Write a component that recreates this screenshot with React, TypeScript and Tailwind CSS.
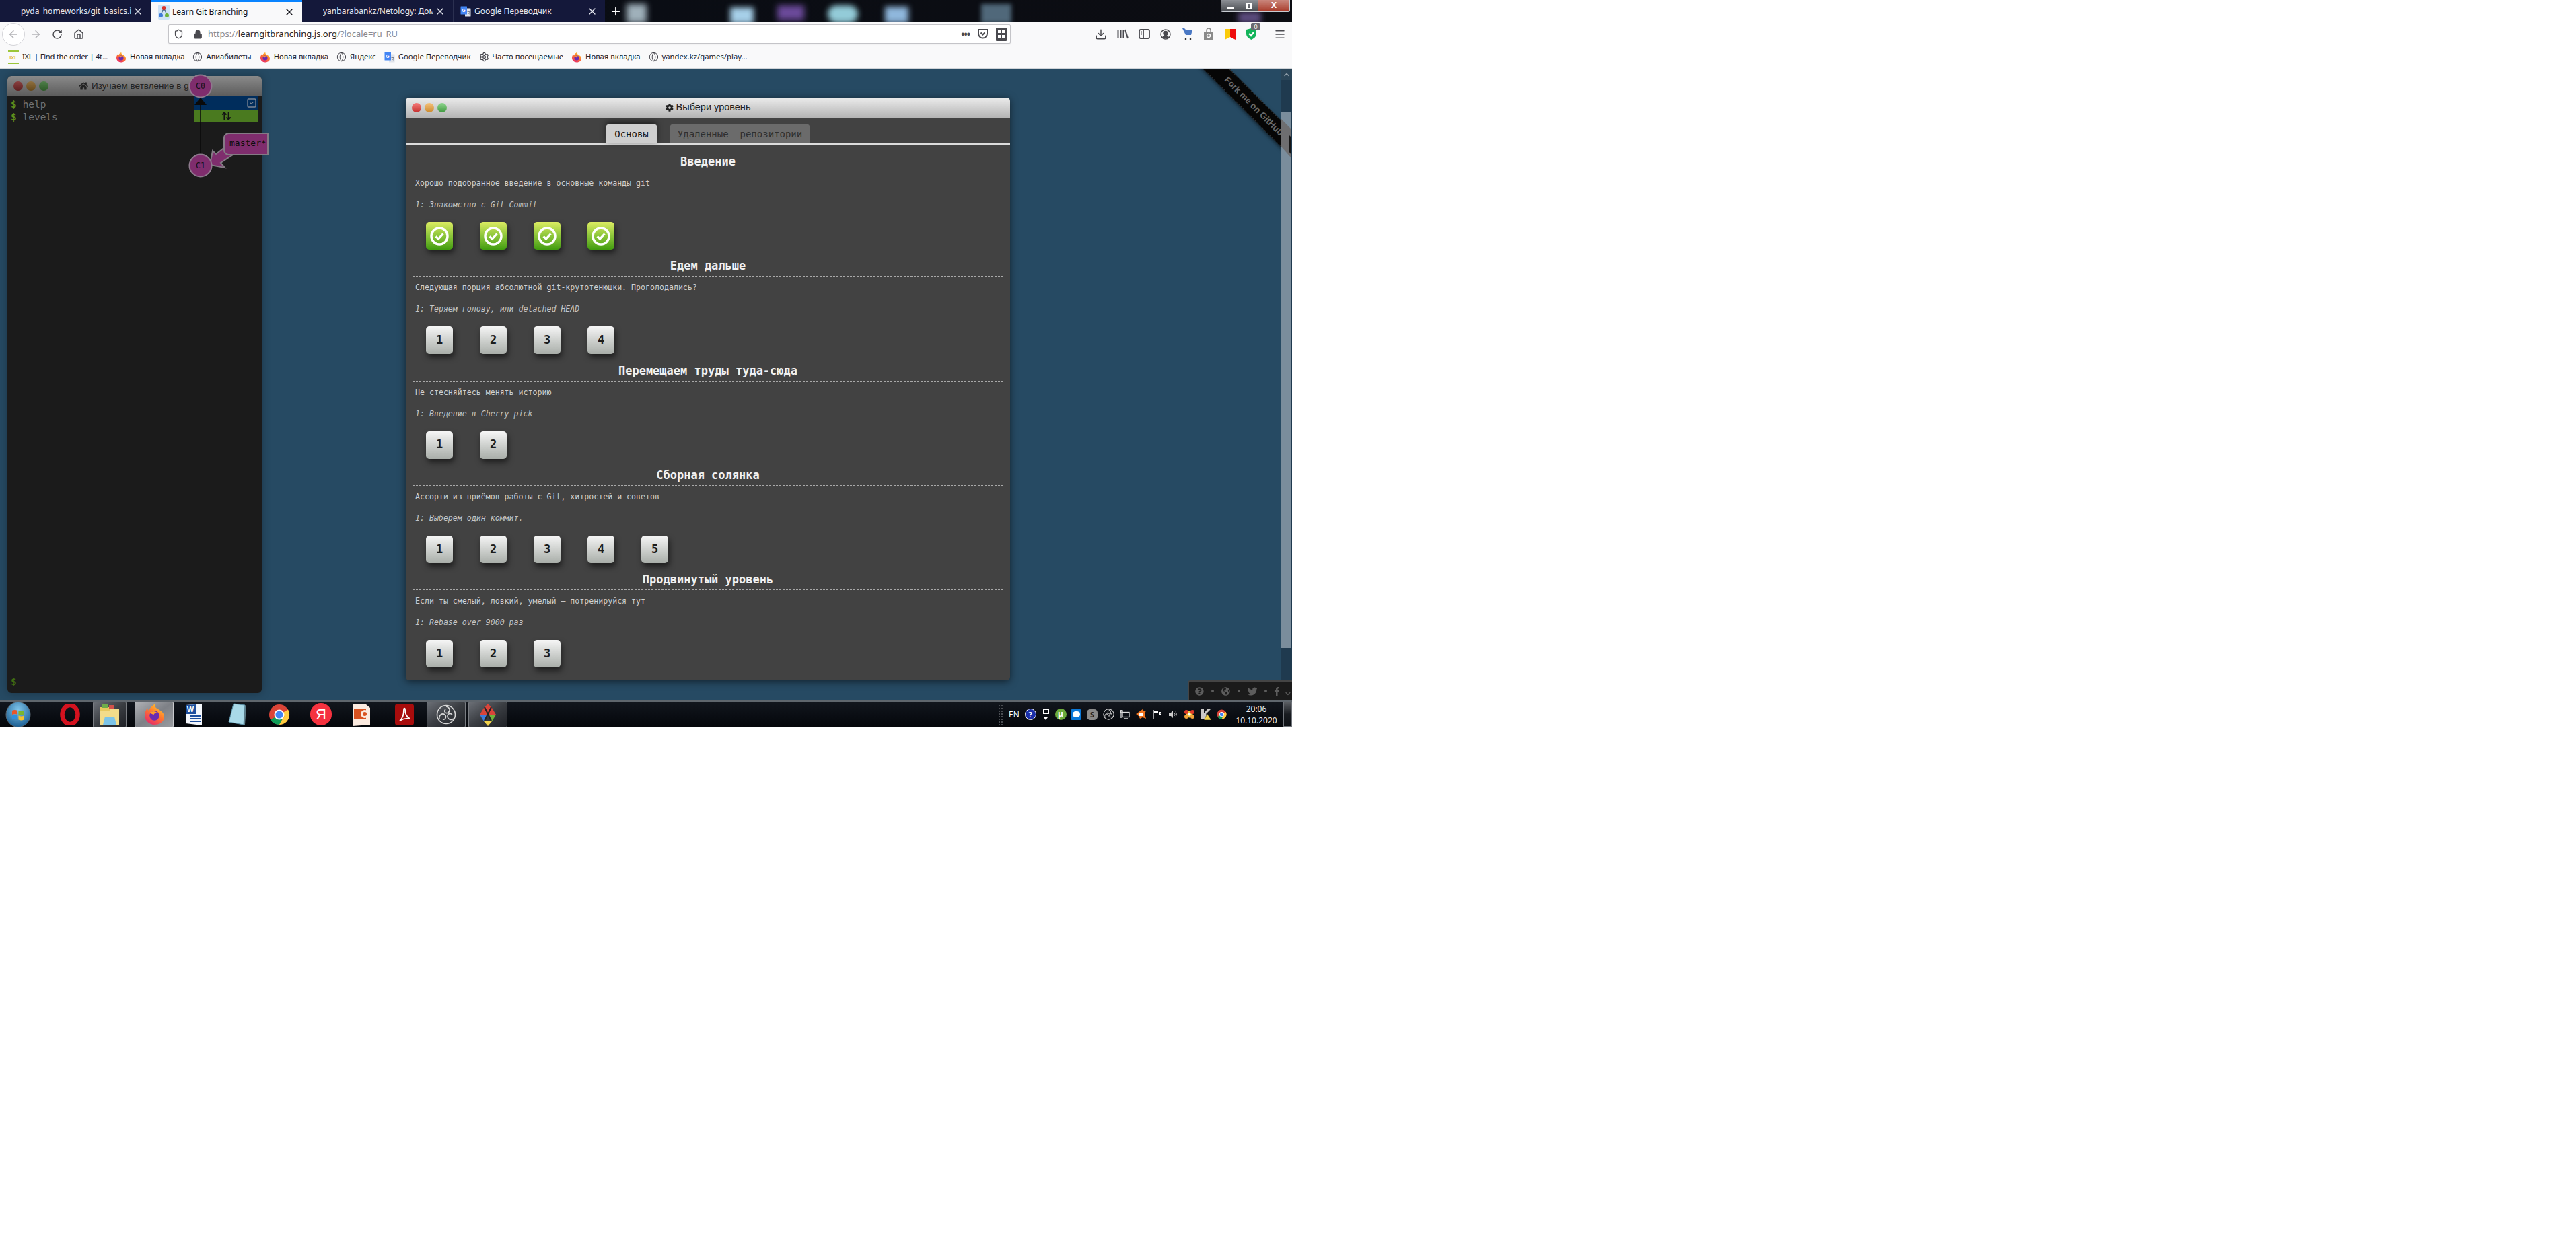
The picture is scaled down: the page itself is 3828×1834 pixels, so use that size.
import React from "react";
import { ArrowLeft, ArrowRight, RotateCw, Home, Lock, Download, Globe, Settings, X, Plus, Menu, Shield, ChevronUp, ChevronDown, ArrowUpDown, SquareCheck } from "lucide-react";
import { FaQuestionCircle, FaGlobeAmericas, FaTwitter, FaFacebookF, FaHome, FaCog } from "react-icons/fa";

const FirefoxIcon = ({ s = 16 }: { s?: number }) => (
  <svg width={s} height={s} viewBox="0 0 32 32" className="shrink-0">
    <defs>
      <linearGradient id="ffg" x1="0.8" y1="0" x2="0.2" y2="1">
        <stop offset="0" stopColor="#ffd52e" />
        <stop offset="0.45" stopColor="#ff7a2e" />
        <stop offset="1" stopColor="#e6246e" />
      </linearGradient>
    </defs>
    <path d="M16 31C8 31 2 25 2 17c0-4 2-8 4-10 0 2 1 3 2 4 1-4 5-7 9-10-1 3 0 5 3 7 5 3 10 5 10 12 0 6-6 11-14 11z" fill="url(#ffg)" />
    <circle cx="16" cy="18" r="7" fill="#6a2bb0" />
    <path d="M9 14c3-3 8-3 11 0-3 0-5 1-5 3-2-2-4-2-6-3z" fill="#ff9c2e" />
  </svg>
);

const TranslateIcon = ({ s = 16 }: { s?: number }) => (
  <svg width={s} height={s} viewBox="0 0 32 32" className="shrink-0">
    <rect x="14" y="7" width="17" height="24" rx="1" fill="#dfe3ea" />
    <rect x="1" y="1" width="19" height="24" rx="1" fill="#4285f4" />
    <text x="10" y="17" fontSize="13" fontWeight="700" textAnchor="middle" fill="#fff" fontFamily="Liberation Sans, sans-serif">G</text>
    <path d="M21 17h8M25 15v2M22 25c3-2 5-4 6-8M23 19c1 3 4 5 6 6" stroke="#6b7280" strokeWidth="1.6" fill="none" />
  </svg>
);

const GitBranchFav = () => (
  <svg width="17" height="22" viewBox="0 0 17 22" className="shrink-0">
    <rect width="17" height="22" rx="2" fill="#cfe3f6" />
    <path d="M8.5 5 4 15M8.5 5 13 15M8.5 5v5" stroke="#33527a" strokeWidth="1.2" />
    <circle cx="8.5" cy="5" r="3" fill="#d9342b" />
    <circle cx="4" cy="16" r="3" fill="#3d7bd9" />
    <circle cx="13" cy="16" r="3" fill="#6fb33a" />
  </svg>
);

const IxlIcon = () => (
  <svg width="16" height="20" viewBox="0 0 16 20" className="shrink-0">
    <rect y="0" width="16" height="2" fill="#9cc63a" />
    <rect y="18" width="16" height="2" fill="#9cc63a" />
    <text x="8" y="13" fontSize="7.5" fontWeight="700" textAnchor="middle" fill="#e0b73a" fontFamily="Liberation Sans, sans-serif">IXL</text>
  </svg>
);

const ChromeIcon = ({ s = 30 }: { s?: number }) => (
  <svg width={s} height={s} viewBox="0 0 32 32">
    <circle cx="16" cy="16" r="15" fill="#db4437" />
    <path d="M16 16 3 23.5A15 15 0 0 0 16 31l7.5-13z" fill="#0f9d58" />
    <path d="M16 16 29 8.5A15 15 0 0 1 16 31l7.5-13z" fill="#ffcd40" />
    <circle cx="16" cy="16" r="7.5" fill="#fff" />
    <circle cx="16" cy="16" r="5.6" fill="#4285f4" />
  </svg>
);

const Dot = ({ c }: { c: string }) => <span className={`w-[14px] h-[14px] rounded-full ${c}`} />;

const Tab = ({ title, icon, active, last }: { title: string; icon?: React.ReactNode; active?: boolean; last?: boolean }) => (
  <div
    className={
      active
        ? "w-[224px] h-[33px] flex items-center pl-[10px] pr-[11px] bg-[#f9f9fa] text-[#15141a] border-t-[3px] border-[#0a84ff] shrink-0"
        : `w-[225px] h-[33px] flex items-center pl-[10px] pr-[11px] bg-[#14183a] text-[#e4e6ee] shrink-0 ${last ? "" : "border-r border-[#2b3050]"}`
    }
  >
    <div className="w-[21px] shrink-0 flex justify-start">{icon}</div>
    <div className="flex-1 overflow-hidden whitespace-nowrap text-[12px] leading-[20px]">{title}</div>
    <X size={16} strokeWidth={2} className="ml-[2px] shrink-0" />
  </div>
);

const Bookmark = ({ icon, label, tight }: { icon: React.ReactNode; label: string; tight?: boolean }) => (
  <div className="flex items-center gap-[5px] whitespace-nowrap">
    {icon}
    <span className={`text-[11.3px] text-[#20232a] ${tight ? "tracking-[-0.3px]" : ""}`}>{label}</span>
  </div>
);

const G = () => <Globe size={15} strokeWidth={1.5} className="text-[#3f3f46] shrink-0" />;

const LevelBtn = ({ n }: { n: number }) => (
  <div className="w-[40px] h-[41px] rounded-[5px] bg-gradient-to-b from-[#f6f6f6] to-[#a9aea9] shadow-[2px_5px_8px_rgba(0,0,0,0.55)] flex items-center justify-center text-[17px] font-bold text-[#1c1c1c]">
    {n}
  </div>
);

const DoneBtn = () => (
  <div className="w-[40px] h-[41px] rounded-[5px] bg-gradient-to-b from-[#dcec62] via-[#8cc63a] to-[#3f9c0c] shadow-[2px_5px_8px_rgba(0,0,0,0.55)] flex items-center justify-center">
    <svg width="30" height="30" viewBox="0 0 30 30">
      <circle cx="15" cy="15" r="12" fill="none" stroke="#fff" strokeWidth="3.4" />
      <path d="M9.5 15.5 13.5 19 20.5 11.5" fill="none" stroke="#fff" strokeWidth="3.2" />
    </svg>
  </div>
);

const Section = ({ title, desc, item, count, done }: { title: string; desc: string; item: string; count: number; done?: boolean }) => (
  <section className="h-[155.25px] shrink-0 px-[10px]">
    <h2 className="h-[31px] border-b border-dashed border-[#a8a8a8] text-center text-[17px] leading-[30px] font-bold text-[#f0f0f0]">{title}</h2>
    <p className="mt-[8px] pl-[4px] h-[16px] leading-[16px] text-[11.6px] text-[#cfcfcf] whitespace-pre">{desc}</p>
    <p className="mt-[16px] pl-[4px] h-[16px] leading-[16px] text-[11.6px] italic text-[#c4c4c4] whitespace-pre">{item}</p>
    <div className="mt-[18px] pl-[20px] flex gap-[40px]">
      {Array.from({ length: count }, (_, i) => (done ? <DoneBtn key={i} /> : <LevelBtn key={i} n={i + 1} />))}
    </div>
  </section>
);

const Graph = () => (
  <svg viewBox="280 110 125 160" width="125" height="160" className="absolute left-[269px] top-[-3px] overflow-visible">
    <line x1="298" y1="150" x2="298" y2="230" stroke="#0a0a0a" strokeWidth="1.5" />
    <polygon points="298,145 289,156 307,156" fill="#0a0a0a" />
    <circle cx="298" cy="128" r="16.5" fill="#7f2d6d" stroke="#8f7b8e" strokeWidth="2" />
    <text x="298" y="132" textAnchor="middle" fontSize="11.5" fill="#0d0d0d" fontFamily="DejaVu Sans Mono, monospace">C0</text>
    <polygon points="312,245 316,224 321,229 335,218 346,230 328,242 334,249" fill="#7f2d6d" stroke="#857a85" strokeWidth="2" />
    <circle cx="298" cy="246" r="16.5" fill="#7f2d6d" stroke="#8f7b8e" strokeWidth="2" />
    <text x="298" y="250" textAnchor="middle" fontSize="11.5" fill="#0d0d0d" fontFamily="DejaVu Sans Mono, monospace">C1</text>
    <path d="M398 198H340a7 7 0 0 0-7 7v18a7 7 0 0 0 7 7H398z" fill="#7f2d6d" stroke="#857a85" strokeWidth="2" />
    <text x="341" y="217" fontSize="13" fill="#0d0d0d" fontFamily="DejaVu Sans Mono, monospace">master*</text>
  </svg>
);

const Terminal = () => (
  <div className="relative w-[378px] h-[917px] mt-[11px] ml-[11px] shrink-0 rounded-[6px] bg-[#1b1b1b] shadow-[0_0_14px_rgba(0,0,0,0.3)]">
    <div className="h-[30px] rounded-t-[6px] bg-gradient-to-b from-[#8a8a8a] to-[#5c5c5c] flex items-center pl-[9px] gap-[5px] overflow-hidden">
      <span className="w-[14px] h-[14px] rounded-full bg-gradient-to-b from-[#8a4040] to-[#5e2020]" />
      <span className="w-[14px] h-[14px] rounded-full bg-gradient-to-b from-[#8f7040] to-[#66491c]" />
      <span className="w-[14px] h-[14px] rounded-full bg-gradient-to-b from-[#4f7f4a] to-[#2c5a28]" />
      <div className="ml-[40px] flex items-center gap-[5px] whitespace-nowrap text-[13.5px] text-[#222] font-['Liberation_Sans',sans-serif]">
        <FaHome size={14} />
        <span>Изучаем ветвление в git</span>
      </div>
    </div>
    <div className="pt-[3px] pl-[5px] font-['DejaVu_Sans_Mono',monospace] text-[14.4px] leading-[18.5px] text-[#727272]">
      <div><span className="font-bold text-[#5f8f1c] mr-[9px]">$</span>help</div>
      <div><span className="font-bold text-[#5f8f1c] mr-[9px]">$</span>levels</div>
    </div>
    <div className="absolute left-[5px] bottom-[5px] font-['DejaVu_Sans_Mono',monospace] text-[14.4px] font-bold text-[#3f6a12]">$</div>
    <div className="absolute left-[278px] top-[30px] w-[95px]">
      <div className="h-[20px] bg-[#002d5c] flex items-center justify-end pr-[2px]"><SquareCheck size={16} className="text-[#7d8794]" /></div>
      <div className="h-[19px] bg-[#4a7a1f] flex items-center justify-center"><ArrowUpDown size={15} strokeWidth={3} className="text-[#141414]" /></div>
    </div>
    <Graph />
  </div>
);

const Modal = () => (
  <div className="w-[898px] h-[866px] mt-[43px] ml-[214px] shrink-0 rounded-[5px] bg-[#424242] shadow-[0_2px_12px_rgba(0,0,0,0.55)] flex flex-col overflow-hidden font-['DejaVu_Sans_Mono',monospace]">
    <div className="relative h-[30px] shrink-0 bg-gradient-to-b from-[#ececec] to-[#b4b4b4] flex items-center justify-center gap-[4px] text-[14.5px] text-[#222] font-['Liberation_Sans',sans-serif]">
      <div className="absolute left-[9px] top-[8px] flex gap-[5px]">
        <Dot c="bg-gradient-to-b from-[#f57a7a] to-[#c42d2d]" />
        <Dot c="bg-gradient-to-b from-[#f5c27a] to-[#cc8a2a]" />
        <Dot c="bg-gradient-to-b from-[#8fd68f] to-[#3f9a3f]" />
      </div>
      <FaCog size={12} />
      <span>Выбери уровень</span>
    </div>
    <div className="mt-[10px] h-[30px] shrink-0 border-b-2 border-[#dcdcdc] flex justify-center gap-[20px] text-[14px] leading-[28px] whitespace-pre">
      <div className="w-[75px] h-[28px] rounded-t-[3px] bg-[#cfcfcf] text-[#151515] text-center shadow-[0_-3px_10px_rgba(0,0,0,0.6)]">Основы</div>
      <div className="w-[207px] h-[28px] rounded-t-[3px] bg-[#6b6b6b] text-[#2f2f2f] text-center">Удаленные  репозитории</div>
    </div>
    <div className="mt-[10px] flex flex-col">
      <Section title="Введение" desc="Хорошо подобранное введение в основные команды git" item="1: Знакомство с Git Commit" count={4} done />
      <Section title="Едем дальше" desc="Следующая порция абсолютной git-крутотенюшки. Проголодались?" item="1: Теряем голову, или detached HEAD" count={4} />
      <Section title="Перемещаем труды туда-сюда" desc="Не стесняйтесь менять историю" item="1: Введение в Cherry-pick" count={2} />
      <Section title="Сборная солянка" desc="Ассорти из приёмов работы с Git, хитростей и советов" item="1: Выберем один коммит." count={5} />
      <Section title="Продвинутый уровень" desc="Если ты смелый, ловкий, умелый – потренируйся тут" item="1: Rebase over 9000 раз" count={3} />
    </div>
  </div>
);

const Ribbon = () => (
  <div className="absolute top-0 right-[16px] w-[160px] h-[170px] overflow-hidden">
    <div className="absolute left-[4px] top-[42px] w-[230px] h-[28px] rotate-45 origin-center bg-[#060606] border-y border-dashed border-[#333] shadow-[0_2px_5px_rgba(0,0,0,0.5)] flex items-center justify-center text-[13px] font-bold text-[#6a6a6a] whitespace-nowrap font-['Liberation_Sans',sans-serif]">
      Fork me on GitHub
    </div>
  </div>
);

const Scrollbar = () => (
  <div className="w-[16px] h-full shrink-0 bg-[#1f3a4f] flex flex-col">
    <div className="h-[17px] bg-[#2a4558] flex items-center justify-center"><ChevronUp size={12} strokeWidth={3} className="text-[#8b9aa6]" /></div>
    <div className="relative mt-[48px] w-[15px] h-[796px] bg-[#7a8d9c]">
      <svg width="15" height="80" viewBox="0 0 15 80" className="absolute left-0 top-[8px]">
        <polygon points="0,2 15,17 15,60 0,43" fill="#6e6e70" />
        <polygon points="11,25 15,29 15,55 11,50" fill="#161616" />
      </svg>
    </div>
  </div>
);

const Widget = () => (
  <div className="absolute right-0 bottom-0 w-[155px] h-[30px] bg-[#1b1b1b] border-t-2 border-l-2 border-[#454545] rounded-tl-[4px] flex items-center pl-[9px] text-[#5d5d5d]">
    <FaQuestionCircle size={13} />
    <span className="w-[4px] h-[4px] rounded-full bg-[#5d5d5d] ml-[11px]" />
    <FaGlobeAmericas size={13} className="ml-[11px]" />
    <span className="w-[4px] h-[4px] rounded-full bg-[#5d5d5d] ml-[11px]" />
    <FaTwitter size={15} className="ml-[11px]" />
    <span className="w-[4px] h-[4px] rounded-full bg-[#5d5d5d] ml-[11px]" />
    <FaFacebookF size={13} className="ml-[8px]" />
    <ChevronDown size={12} strokeWidth={2.5} className="ml-[4px] mt-[8px]" />
  </div>
);

const ActiveBox = "bg-gradient-to-br from-[#6b6f76] via-[#3a3d42] to-[#1f2126] border border-[#7a7d82] rounded-[2px]";

const TaskIcons = () => (
  <div className="flex h-full items-center">
    <div className="w-[54px] flex justify-center">
      <svg width="38" height="38" viewBox="0 0 38 38">
        <defs>
          <radialGradient id="orb" cx="0.5" cy="0.3" r="0.8"><stop offset="0" stopColor="#7fc4ea" /><stop offset="1" stopColor="#0c4f86" /></radialGradient>
        </defs>
        <ellipse cx="19" cy="19" rx="18" ry="18.5" fill="url(#orb)" stroke="#5d6a75" />
        <path d="M10 13q4-2 8 0v6q-4-2-8 0z" fill="#e8562a" />
        <path d="M19.5 13q4 2 8 0v6q-4 2-8 0z" fill="#7ab62e" />
        <path d="M10 20.5q4-2 8 0v6q-4-2-8 0z" fill="#2c8ee0" />
        <path d="M19.5 20.5q4 2 8 0v6q-4 2-8 0z" fill="#f5c22c" />
      </svg>
    </div>
    <div className="ml-[22px] w-[56px] flex justify-center">
      <svg width="32" height="32" viewBox="0 0 32 32"><ellipse cx="16" cy="16" rx="11.5" ry="14" fill="none" stroke="#d3121f" strokeWidth="6.5" /></svg>
    </div>
    <div className={`ml-[6px] w-[50px] h-[38px] flex justify-center items-center ${ActiveBox}`}>
      <svg width="32" height="34" viewBox="0 0 32 34"><path d="M2 6h10l3 3h15v23H2z" fill="#f2dc8a" /><path d="M2 6h14v6H2z" fill="#e7c95e" /><rect x="5" y="2" width="8" height="5" fill="#6fae4a" /><rect x="15" y="3" width="8" height="5" fill="#d0524a" /><path d="M9 20h14l3 12H6z" fill="#7cc4e8" /></svg>
    </div>
    <div className="ml-[12px] w-[58px] h-[38px] flex justify-center items-center bg-gradient-to-br from-[#b0b2b6] via-[#7d8086] to-[#9a9ca0] border border-[#c8c9cc] rounded-[2px]"><FirefoxIcon s={33} /></div>
    <div className="ml-[2px] w-[58px] flex justify-center">
      <svg width="32" height="34" viewBox="0 0 32 34"><path d="M3 3 27 1v32L3 30z" fill="#f4f7fc" /><path d="M3 3 18 2v14H3z" fill="#1e4f9e" /><text x="10" y="13" fontSize="11" fontWeight="700" textAnchor="middle" fill="#fff" fontFamily="Liberation Sans, sans-serif">W</text><path d="M10 19h15M10 23h15M10 27h15" stroke="#1e4f9e" strokeWidth="2" /></svg>
    </div>
    <div className="ml-[5px] w-[58px] flex justify-center">
      <svg width="30" height="34" viewBox="0 0 30 34"><path d="M10 1 27 3 25 32 3 28z" fill="#a9d9e8" stroke="#5a8fa5" /><path d="M25 32 27 3 29 5 27 32z" fill="#5d7d8a" /></svg>
    </div>
    <div className="ml-[5px] w-[58px] flex justify-center"><ChromeIcon s={32} /></div>
    <div className="ml-[4px] w-[58px] flex justify-center">
      <div className="w-[32px] h-[33px] rounded-full bg-[#f5323f] text-white text-[22px] leading-[33px] text-center font-['Liberation_Sans',sans-serif]">Я</div>
    </div>
    <div className="ml-[3px] w-[58px] flex justify-center">
      <svg width="32" height="34" viewBox="0 0 32 34"><path d="M2 2h20l6 5v25l-26 2z" fill="#fbeadf" /><path d="M4 8h18v16H4z" fill="#d9521f" /><circle cx="20" cy="16" r="6" fill="#fbeadf" /><circle cx="20" cy="16" r="3" fill="#d9521f" /></svg>
    </div>
    <div className="ml-[5px] w-[58px] flex justify-center">
      <svg width="28" height="32" viewBox="0 0 28 32"><rect width="28" height="32" rx="4" fill="#a80c0c" /><path d="M7 25c4-3 6-9 6-16 0-3 2-3 2 0 0 6 2 10 7 13-5-1-10 0-15 3z" fill="none" stroke="#fff" strokeWidth="1.8" /></svg>
    </div>
    <div className={`ml-[4px] w-[58px] h-[38px] flex justify-center items-center ${ActiveBox}`}>
      <svg width="30" height="30" viewBox="0 0 30 30" fill="none" stroke="#d8d8d8" strokeWidth="1.6"><circle cx="15" cy="15" r="13.5" /><path d="M15 3c5 1 7 6 3 9-4 2-7-2-4-5M26 21c-4 3-9 1-9-4 0-4 6-5 7-1M5 21c-1-5 4-9 8-6 3 3 1 8-3 7" /></svg>
    </div>
    <div className={`ml-[4px] w-[58px] h-[38px] flex justify-center items-center ${ActiveBox}`}>
      <svg width="32" height="34" viewBox="0 0 32 34"><path d="M16 17 4 17 10 7 16 1z" fill="#d9443a" /><path d="M16 17V1l6 6 6 10z" fill="#d9443a" /><path d="M16 17 28 17 22 27 16 17z" fill="#6fb33a" /><path d="M16 17 4 17l6 10z" fill="#3d7bd9" /><path d="M10 27h12l-6 7z" fill="#f2d24a" /><path d="M11 6 21 26M21 6 11 26" stroke="#222" strokeWidth="2" /></svg>
    </div>
  </div>
);

const TrayCell = ({ children }: { children: React.ReactNode }) => <div className="w-[24px] shrink-0 flex justify-center items-center">{children}</div>;

const Tray = () => (
  <div className="ml-auto flex h-full items-center text-white">
    <div className="w-[8px] h-[30px] mr-[4px] bg-[radial-gradient(#4a4d52_1px,transparent_1px)] [background-size:4px_4px]" />
    <TrayCell><span className="text-[12px]">EN</span></TrayCell>
    <TrayCell><div className="w-[17px] h-[17px] rounded-full bg-[#1a2fa8] border border-white text-[11px] leading-[15px] text-center font-bold">?</div></TrayCell>
    <div className="w-[22px] flex flex-col items-center gap-[5px]"><div className="w-[9px] h-[7px] border border-white" /><div className="w-0 h-0 border-x-[3px] border-x-transparent border-t-[4px] border-t-white" /></div>
    <div className="w-[22px] flex justify-center"><div className="w-[17px] h-[17px] rounded-full bg-[#6cab3c] text-white text-[12px] leading-[16px] text-center font-bold">µ</div></div>
    <TrayCell><div className="w-[16px] h-[16px] rounded-[2px] bg-[#0a78d8] flex items-center justify-center"><div className="w-[11px] h-[9px] rounded-full bg-white" /></div></TrayCell>
    <TrayCell><div className="w-[16px] h-[16px] rounded-[5px] bg-[#8a8a8a] text-[#222] text-[11px] leading-[16px] text-center font-bold">S</div></TrayCell>
    <TrayCell><svg width="17" height="17" viewBox="0 0 30 30" fill="none" stroke="#d8d8d8" strokeWidth="1.8"><circle cx="15" cy="15" r="13.5" /><path d="M15 3c5 1 7 6 3 9-4 2-7-2-4-5M26 21c-4 3-9 1-9-4 0-4 6-5 7-1M5 21c-1-5 4-9 8-6 3 3 1 8-3 7" /></svg></TrayCell>
    <TrayCell><svg width="15" height="15" viewBox="0 0 15 15" fill="none" stroke="#ddd" strokeWidth="1.3"><rect x="4" y="4.5" width="10" height="7" /><path d="M2 1v12M1 2h3v3H1zM6 14h6" /></svg></TrayCell>
    <TrayCell><svg width="17" height="17" viewBox="0 0 17 17"><path d="M1 8 11 1l2 3 3-1-2 5 2 7-5-2-4 2-2-4z" fill="#f0741e" /><rect x="6" y="6" width="5" height="5" fill="#fff" /></svg></TrayCell>
    <TrayCell><svg width="15" height="15" viewBox="0 0 15 15"><path d="M2 1v13" stroke="#fff" strokeWidth="1.2" /><path d="M3 2h6v4H3zM10 4h4l-2 2 2 2h-4z" fill="#fff" /></svg></TrayCell>
    <TrayCell><svg width="15" height="15" viewBox="0 0 15 15"><path d="M1 5h3l3-3v11L4 10H1z" fill="#ccc" /><path d="M9 5q2 2.500 0 5M11 3.500q3 4 0 8" stroke="#bbb" fill="none" /></svg></TrayCell>
    <TrayCell><svg width="17" height="17" viewBox="0 0 17 17"><circle cx="8.500" cy="8.500" r="5" fill="#f2c63a" /><circle cx="4" cy="5" r="3" fill="#e03a2a" /><circle cx="13" cy="5" r="3" fill="#e03a2a" /><circle cx="4" cy="12" r="3" fill="#f2a33a" /><circle cx="13" cy="12" r="3" fill="#f2a33a" /><circle cx="8.500" cy="8.500" r="2" fill="#fff" /></svg></TrayCell>
    <TrayCell><svg width="17" height="17" viewBox="0 0 17 17"><path d="M1 1h5v6l5-6h5L9 8l6 8H1z" fill="#c8c8c8" /><path d="M11 8 17 17H6z" fill="#f2d24a" stroke="#222" strokeWidth="0.5" /></svg></TrayCell>
    <TrayCell><ChromeIcon s={15} /></TrayCell>
    <div className="w-[80px] flex flex-col items-center text-[12px] leading-[17px] text-[#f0f0f0]">
      <span>20:06</span>
      <span>10.10.2020</span>
    </div>
    <div className="w-[13px] h-full bg-gradient-to-b from-[#5a5d62] via-[#181b20] to-[#0e1116] border border-[#70747a]" />
  </div>
);

export default function App() {
  return (
    <div className="w-[3828px] h-[1834px] bg-white font-['Noto_Sans',sans-serif] overflow-hidden">
      <div className="w-[1920px] h-[1080px] flex flex-col">
        <div className="relative h-[33px] shrink-0 flex bg-gradient-to-r from-[#05060c] via-[#0a0d14] to-[#0c0d12] overflow-hidden">
          <Tab title="pyda_homeworks/git_basics.ipy" />
          <Tab title="Learn Git Branching" icon={<GitBranchFav />} active />
          <Tab title="yanbarabankz/Netology: Дома" />
          <Tab title="Google Переводчик" icon={<TranslateIcon />} last />
          <div className="w-[32px] flex items-center justify-center text-white"><Plus size={18} strokeWidth={2.4} /></div>
          <div className="w-[30px] h-[28px] mt-[6px] bg-[#9fb0ba] blur-[5px]" />
          <div className="ml-[124px] w-[35px] h-[24px] mt-[11px] bg-[#a6cfe8] blur-[4px]" />
          <div className="ml-[35px] w-[40px] h-[22px] mt-[8px] bg-[#6b4a9a] blur-[5px]" />
          <div className="ml-[35px] w-[45px] h-[26px] mt-[8px] rounded-full bg-[#93cbd8] blur-[4px]" />
          <div className="ml-[40px] w-[35px] h-[24px] mt-[10px] bg-[#8fb7dc] blur-[4px]" />
          <div className="ml-[108px] w-[45px] h-[28px] mt-[6px] bg-[#50687a] blur-[3px]" />
          <div className="absolute left-[1840px] top-[18px] w-[34px] h-[16px] bg-[#5d4d80] blur-[4px]" />
          <div className="absolute right-[3px] top-0 w-[103px] h-[18px] flex border border-[#c8ccd2] border-t-0 rounded-b-[3px] overflow-hidden text-white">
            <div className="w-[27px] bg-gradient-to-b from-[#8d9096] to-[#4a4d52] flex items-end justify-center pb-[4px]"><div className="w-[10px] h-[3px] bg-white" /></div>
            <div className="w-[28px] bg-gradient-to-b from-[#8d9096] to-[#4a4d52] border-x border-[#bbb] flex items-center justify-center"><div className="w-[8px] h-[10px] border-2 border-white" /></div>
            <div className="flex-1 bg-gradient-to-b from-[#c9867c] to-[#a83a2a] text-center text-[12px] leading-[16px] font-bold">X</div>
          </div>
        </div>

        <div className="h-[35px] shrink-0 bg-[#f9f9fa] flex items-center text-[#4a4a4f]">
          <div className="ml-[3px] w-[34px] h-[34px] rounded-full border border-[#d4d4d8] bg-white flex items-center justify-center text-[#b4b4b8]"><ArrowLeft size={18} /></div>
          <div className="ml-[4px] w-[24px] flex justify-center text-[#b4b4b8]"><ArrowRight size={18} /></div>
          <div className="ml-[8px] w-[24px] flex justify-center"><RotateCw size={16} strokeWidth={2.2} /></div>
          <div className="ml-[8px] w-[24px] flex justify-center"><Home size={16} strokeWidth={2.2} /></div>
          <div className="ml-[121px] w-[1252px] h-[29px] bg-white border border-[#c4c4c8] rounded-[2px] flex items-center shadow-[0_1px_2px_rgba(0,0,0,0.1)]">
            <Shield size={15} className="ml-[7px]" />
            <div className="ml-[6px] w-px h-[22px] bg-[#e0e0e4]" />
            <Lock size={14} fill="#4a4a4f" className="ml-[7px]" />
            <span className="ml-[8px] text-[13px] text-[#8a8a90] whitespace-nowrap">https://<span className="text-[#26262a]">learngitbranching.js.org</span>/?locale=ru_RU</span>
            <div className="ml-auto flex items-center gap-[11px] pr-[5px]">
              <span className="text-[14px] leading-none font-bold tracking-[-1px]">•••</span>
              <svg width="17" height="17" viewBox="0 0 17 17" fill="none" stroke="#4a4a4f" strokeWidth="2"><path d="M2 2h13v6a6.500 6.500 0 0 1-13 0z" /><path d="m5.500 6.500 3 3 3-3" /></svg>
              <svg width="16" height="20" viewBox="0 0 16 20"><rect width="16" height="20" rx="1" fill="#4a4a4f" /><rect x="3" y="4" width="4" height="4" fill="#fff" /><rect x="9" y="4" width="4" height="4" fill="#fff" /><rect x="3" y="11" width="4" height="4" fill="#fff" /><rect x="9" y="11" width="4" height="4" fill="#fff" /></svg>
            </div>
          </div>
          <div className="ml-[120px] w-[28px] flex justify-center"><Download size={18} strokeWidth={2} /></div>
          <div className="ml-[4px] w-[28px] flex justify-center">
            <svg width="17" height="15" viewBox="0 0 17 15" fill="none" stroke="#4a4a4f" strokeWidth="2"><path d="M1.500 1v13M5.500 1v13M9.500 1v13M12 1l4 13" /></svg>
          </div>
          <div className="ml-[4px] w-[28px] flex justify-center">
            <svg width="17" height="15" viewBox="0 0 17 15" fill="none" stroke="#4a4a4f" strokeWidth="1.8"><rect x="1" y="1" width="15" height="13" rx="2" /><path d="M7 1v13M3 4.500h2M3 7.500h2" /></svg>
          </div>
          <div className="ml-[4px] w-[28px] flex justify-center">
            <svg width="16" height="16" viewBox="0 0 16 16" fill="none" stroke="#4a4a4f" strokeWidth="1.4"><circle cx="8" cy="8" r="7" /><circle cx="8" cy="6.500" r="3" fill="#4a4a4f" /><path d="M3.500 13c1-3 8-3 9 0" fill="#4a4a4f" /></svg>
          </div>
          <div className="ml-[4px] w-[28px] flex justify-center">
            <svg width="17" height="20" viewBox="0 0 17 20"><path d="M1 1h3l2 2h10l-2 8H6z" fill="#4a78c4" /><circle cx="6" cy="17" r="1.300" fill="#333" /><circle cx="13" cy="17" r="1.300" fill="#333" /></svg>
          </div>
          <div className="ml-[4px] w-[28px] flex justify-center">
            <svg width="16" height="17" viewBox="0 0 16 17"><path d="M1 5h14v12H1z" fill="#8a8a8a" /><path d="M5 6V3a3 3 0 0 1 6 0v3" fill="none" stroke="#8a8a8a" strokeWidth="1.4" /><circle cx="8" cy="11" r="2.500" fill="none" stroke="#fff" strokeWidth="1.3" /></svg>
          </div>
          <div className="ml-[4px] w-[28px] flex justify-center">
            <svg width="16" height="16" viewBox="0 0 16 16"><path d="M0 0h8v12l-8 4z" fill="#fbcb0a" /><path d="M8 0h8v16l-8-4z" fill="#ef0c0c" /></svg>
          </div>
          <div className="relative ml-[3px] w-[28px] flex justify-center">
            <svg width="15" height="17" viewBox="0 0 15 17"><path d="M7.500 0 15 2v6c0 5-4 7-7.500 9C4 15 0 13 0 8V2z" fill="#14b45a" /><path d="m4 8 3 3 4-5" fill="none" stroke="#fff" strokeWidth="2.2" /></svg>
            <div className="absolute left-[14px] top-[-8px] w-[14px] h-[11px] rounded-[2px] bg-[#6a6a72] text-white text-[9px] leading-[11px] text-center">0</div>
          </div>
          <div className="ml-[8px] w-px h-[24px] bg-[#d8d8dc]" />
          <div className="ml-[8px] w-[24px] flex justify-center"><Menu size={18} strokeWidth={2} /></div>
        </div>

        <div className="h-[34px] shrink-0 bg-[#f9f9fa] border-b border-[#d0d4d8] pl-[12px] flex items-center gap-[12px]">
          <Bookmark icon={<IxlIcon />} label="IXL | Find the order | 4t..." tight />
          <Bookmark icon={<FirefoxIcon />} label="Новая вкладка" />
          <Bookmark icon={<G />} label="Авиабилеты" />
          <Bookmark icon={<FirefoxIcon />} label="Новая вкладка" />
          <Bookmark icon={<G />} label="Яндекс" />
          <Bookmark icon={<TranslateIcon />} label="Google Переводчик" />
          <Bookmark icon={<Settings size={15} strokeWidth={2} className="text-[#3f3f46] shrink-0" />} label="Часто посещаемые" />
          <Bookmark icon={<FirefoxIcon />} label="Новая вкладка" />
          <Bookmark icon={<G />} label="yandex.kz/games/play..." />
        </div>

        <div className="relative flex-1 min-h-0 bg-[#264a63] flex overflow-hidden">
          <Terminal />
          <Modal />
          <div className="flex-1" />
          <Scrollbar />
          <Ribbon />
          <Widget />
        </div>

        <div className="h-[39px] shrink-0 bg-gradient-to-b from-[#12161d] to-[#05070b] border-t-2 border-[#5f666d] flex items-center">
          <TaskIcons />
          <Tray />
        </div>
      </div>
    </div>
  );
}
